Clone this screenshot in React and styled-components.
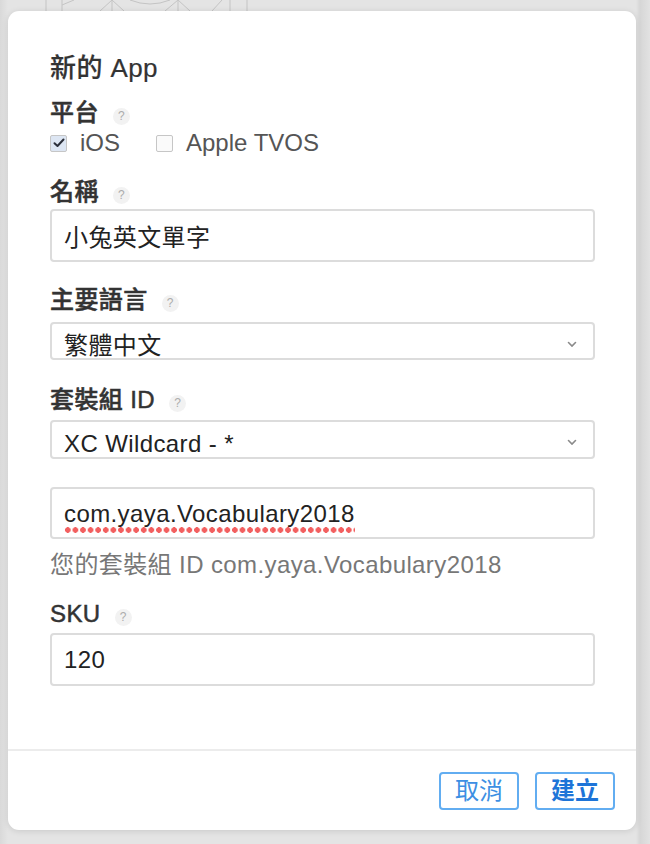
import React from 'react';
import styled, { createGlobalStyle } from 'styled-components';

const GlobalStyle = createGlobalStyle`
  html, body {
    margin: 0;
    padding: 0;
    background: #e3e3e3;
  }
  body {
    font-family: "Liberation Sans", "Noto Sans CJK TC", sans-serif;
    color: #333;
  }
`;

const Page = styled.div`
  width: 650px;
  min-height: 844px;
  display: flex;
  flex-direction: column;
  background: linear-gradient(90deg, #d9d9d9 0px, #e4e4e4 8px, #e4e4e4 636px, #d6d6d6 640px, #e2e2e2 650px);
`;

const Backdrop = styled.svg`
  display: block;
  height: 11px;
  width: 650px;
  flex-shrink: 0;
`;

const Modal = styled.div`
  width: 628px;
  margin-left: 8px;
  height: 819px;
  background: #fff;
  border-radius: 11px;
  box-shadow: 0 1px 6px rgba(0, 0, 0, 0.12);
  display: flex;
  flex-direction: column;
  box-sizing: border-box;
`;

const Body = styled.div`
  flex: 1;
  padding: 41px 41px 0 42px;
  display: flex;
  flex-direction: column;
  letter-spacing: 0.4px;
`;

const Title = styled.h1`
  margin: 0;
  font-size: 26px;
  line-height: 32px;
  font-weight: 500;
  color: #333;
  -webkit-text-stroke: 0.2px #333;
`;

const Label = styled.div`
  display: flex;
  align-items: center;
  margin-top: ${({ $top }) => $top}px;
  font-size: 24px;
  line-height: 28px;
  font-weight: 500;
  color: #333;
  -webkit-text-stroke: 0.5px #333;
`;

const Help = styled.span`
  width: 17px;
  height: 17px;
  margin-left: 14px;
  margin-top: 6px;
  border-radius: 50%;
  background: #f2f2f2;
  color: #acacac;
  font-size: 12px;
  line-height: 17px;
  font-weight: 400;
  letter-spacing: 0;
  -webkit-text-stroke: 0;
  text-align: center;
`;

const CheckRow = styled.div`
  display: flex;
  align-items: center;
  margin-top: 2px;
  height: 28px;
  gap: 36px;
  letter-spacing: 0;
`;

const CheckItem = styled.label`
  display: flex;
  align-items: center;
  gap: 13px;
  font-size: 24px;
  color: #555;
`;

const Box = styled.span`
  flex-shrink: 0;
  width: 17px;
  height: 17px;
  box-sizing: border-box;
  border: 1px solid #c6c6c6;
  border-radius: 2px;
  background: ${({ $checked }) => ($checked ? '#dde6f3' : '#fafafa')};
  display: flex;
  align-items: center;
  justify-content: center;
`;

const Field = styled.div`
  margin-top: ${({ $top }) => $top}px;
  height: ${({ $h }) => $h}px;
  box-sizing: border-box;
  border: 2px solid #dcdcdc;
  border-radius: 4px;
  padding: ${({ $pt }) => $pt || 0}px 12px 0 12px;
  display: flex;
  align-items: ${({ $pt }) => ($pt ? 'flex-start' : 'center')};
  font-size: 24px;
  color: #222;
  overflow: hidden;
`;

const SelectText = styled.span`
  flex: 1;
  line-height: 34px;
  white-space: nowrap;
`;

const Chevron = styled.svg`
  width: 10px;
  height: 7px;
  margin-top: 12px;
  margin-right: 4px;
`;

const Misspelled = styled.span`
  padding-bottom: 5px;
  background-image: radial-gradient(circle, #f25f5f 2.6px, transparent 3px);
  background-size: 7.6px 6px;
  background-repeat: repeat-x;
  background-position: 0 100%;
  line-height: 28px;
  margin-top: 7px;
`;

const HelpText = styled.div`
  margin-top: 12px;
  font-size: 24px;
  line-height: 28px;
  color: #777;
`;

const Footer = styled.div`
  border-top: 2px solid #ececec;
  padding: 21px 21px 20px 0;
  display: flex;
  justify-content: flex-end;
  gap: 16px;
`;

const Button = styled.button`
  width: 80px;
  height: 38px;
  box-sizing: border-box;
  border: 2px solid #62adf1;
  border-radius: 4px;
  background: #fff;
  font-family: inherit;
  font-size: 24px;
  line-height: 1;
  padding: 0;
  font-weight: ${({ $primary }) => ($primary ? 700 : 400)};
  color: ${({ $primary }) => ($primary ? '#1d74d8' : '#3d8fe3')};
  cursor: pointer;
`;

const CheckMark = () => (
  <svg width="12" height="10" viewBox="0 0 12 10">
    <path d="M1.5 5.2 L4.5 8 L10.5 1.5" fill="none" stroke="#2b2f3a" strokeWidth="2" strokeLinecap="round" strokeLinejoin="round" />
  </svg>
);

const DownArrow = () => (
  <Chevron viewBox="0 0 10 7">
    <path d="M1.5 1.5 L5 5 L8.5 1.5" fill="none" stroke="#8a8a8a" strokeWidth="1.6" strokeLinecap="round" />
  </Chevron>
);

const App = () => {
  return (
    <Page>
      <GlobalStyle />
      <Backdrop viewBox="0 0 650 11">
        <g fill="none" stroke="#c4c4c4" strokeWidth="1">
          <path d="M46 0 V11 M62 0 V11 M247 0 V11 M230 0 V11" />
          <path d="M62 5 L74 0 M100 11 L112 0 L124 11 M112 0 V11" />
          <path d="M165 11 L178 0 L190 11 M178 0 V11 M212 11 L222 0" />
          <path d="M130 0 Q150 8 170 0" />
        </g>
      </Backdrop>
      <Modal>
        <Body>
          <Title>新的 App</Title>
          <Label $top={15}>平台<Help>?</Help></Label>
          <CheckRow>
            <CheckItem><Box $checked><CheckMark /></Box>iOS</CheckItem>
            <CheckItem><Box />Apple TVOS</CheckItem>
          </CheckRow>
          <Label $top={21}>名稱<Help>?</Help></Label>
          <Field $top={3} $h={53}>小兔英文單字</Field>
          <Label $top={24}>主要語言<Help>?</Help></Label>
          <Field $top={8} $h={38} $pt={5}>
            <SelectText>繁體中文</SelectText>
            <DownArrow />
          </Field>
          <Label $top={26}>套裝組 ID<Help>?</Help></Label>
          <Field $top={6} $h={39} $pt={5}>
            <SelectText>XC Wildcard - *</SelectText>
            <DownArrow />
          </Field>
          <Field $top={28} $h={52} $pt={4}>
            <Misspelled>com.yaya.Vocabulary2018</Misspelled>
          </Field>
          <HelpText>您的套裝組 ID com.yaya.Vocabulary2018</HelpText>
          <Label $top={21}>SKU<Help>?</Help></Label>
          <Field $top={5} $h={53}>120</Field>
        </Body>
        <Footer>
          <Button>取消</Button>
          <Button $primary>建立</Button>
        </Footer>
      </Modal>
    </Page>
  );
};

export default App;
